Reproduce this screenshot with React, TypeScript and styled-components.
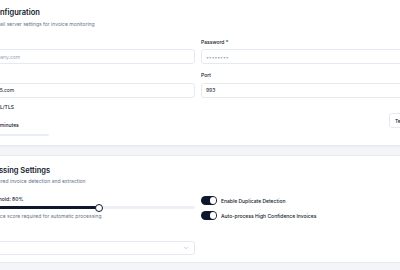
import styled, { createGlobalStyle } from "styled-components";
import { ChevronDown, Mail, Brain } from "lucide-react";

const GlobalStyle = createGlobalStyle`
  body {
    margin: 0;
    background: #f3f5f9;
    font-family: Inter, "Noto Sans", sans-serif;
    color: #0f172a;
    overflow: hidden;
  }
`;

// the page is wider than the window: its left edge and right edge run outside
const Page = styled.div`
  margin: -3px 0 0 -57px;
  width: 510px;
  display: flex;
  flex-direction: column;
  gap: 9px;
`;

const Card = styled.section<{ $padBottom: number }>`
  background: #ffffff;
  border: 1px solid #e7ebf1;
  border-radius: 6px;
  box-shadow: 0 1px 2px rgba(15, 23, 42, 0.04);
  padding: 10px 12px ${(p) => p.$padBottom}px;
`;

const Title = styled.h2`
  margin: 0;
  display: flex;
  align-items: center;
  gap: 4.5px;
  font-size: 7.5px;
  line-height: 10px;
  font-weight: 600;
`;

const Subtitle = styled.p`
  margin: 2.5px 0 0;
  font-size: 5px;
  line-height: 7px;
  color: #64748b;
`;

const Grid = styled.div<{ $top: number }>`
  display: grid;
  grid-template-columns: 1fr 1fr;
  column-gap: 6px;
  row-gap: 8px;
  margin-top: ${(p) => p.$top}px;
`;

const Field = styled.div<{ $top?: number }>`
  display: flex;
  flex-direction: column;
  gap: 3.5px;
  margin-top: ${(p) => p.$top ?? 0}px;
`;

const Label = styled.label`
  display: block;
  font-size: 5px;
  line-height: 7px;
  font-weight: 500;
  color: #111827;
`;

const Input = styled.input`
  box-sizing: border-box;
  height: 15px;
  width: 100%;
  border: 1px solid #e6eaf0;
  border-radius: 3px;
  padding: 0 4px;
  font-family: inherit;
  font-size: 5px;
  color: #0f172a;
  background: #fff;
  outline: none;

  &::placeholder {
    color: #94a3b8;
  }
`;

const Stack = styled.div<{ $gap: number }>`
  display: flex;
  flex-direction: column;
  gap: ${(p) => p.$gap}px;
`;

const ToggleRow = styled.label`
  display: flex;
  align-items: center;
  gap: 4px;
  height: 9px;
  font-size: 5px;
  font-weight: 500;
  color: #111827;
`;

const Switch = styled.span`
  box-sizing: border-box;
  flex: none;
  width: 16px;
  height: 8.5px;
  border-radius: 5px;
  background: #0f172a;
  padding: 1px;
  display: flex;
  justify-content: flex-end;

  &::after {
    content: "";
    width: 6.5px;
    height: 6.5px;
    border-radius: 50%;
    background: #fff;
  }
`;

const Track = styled.div<{ $height: number; $color: string }>`
  height: ${(p) => p.$height}px;
  width: 100%;
  border-radius: 2px;
  background: ${(p) => p.$color};
`;

const ButtonCell = styled.div`
  display: flex;
  justify-content: flex-end;
  align-items: center;
`;

const Button = styled.button`
  height: 15px;
  margin-top: 3px;
  padding: 0 5px;
  border: 1px solid #e6eaf0;
  border-radius: 3px;
  background: #fff;
  font-family: inherit;
  font-size: 5px;
  font-weight: 500;
  color: #0f172a;
`;

const Slider = styled.div`
  position: relative;
  height: 9px;
  display: flex;
  align-items: center;
`;

const SliderFill = styled.div`
  position: absolute;
  left: 0;
  height: 3px;
  border-radius: 2px;
  background: #0f172a;
`;

const Thumb = styled.div`
  position: absolute;
  top: 0.5px;
  width: 8px;
  height: 8px;
  margin-left: -4px;
  box-sizing: border-box;
  border-radius: 50%;
  border: 1.2px solid #0f172a;
  background: #fff;
`;

const Hint = styled.p`
  margin: 1px 0 0;
  font-size: 5px;
  line-height: 7px;
  color: #64748b;
`;

const Select = styled.div`
  box-sizing: border-box;
  height: 14px;
  border: 1px solid #e6eaf0;
  border-radius: 3px;
  padding: 0 5px;
  display: flex;
  align-items: center;
  justify-content: space-between;
  font-size: 5px;
  color: #0f172a;
  background: #fff;
`;

const threshold = 80;
const pct = ((threshold - 50) / 50) * 100;

export default function App() {
  return (
    <>
      <GlobalStyle />
      <Page>
        <Card $padBottom={9}>
          <Title>
            <Mail size={8} strokeWidth={2.2} />
            Email Configuration
          </Title>
          <Subtitle>Configure your email server settings for invoice monitoring</Subtitle>
          <Grid $top={11}>
            <Field>
              <Label>Email Address *</Label>
              <Input placeholder="invoicing@company.com" />
            </Field>
            <Field>
              <Label>Password *</Label>
              <Input type="password" placeholder="••••••••" />
            </Field>
            <Field>
              <Label>IMAP Server</Label>
              <Input defaultValue="outlook.office365.com" />
            </Field>
            <Field>
              <Label>Port</Label>
              <Input defaultValue="993" />
            </Field>
          </Grid>
          <Grid $top={5}>
            <Stack $gap={10.5}>
              <ToggleRow>
                <Switch />
                Enable SSL/TLS
              </ToggleRow>
              <Stack $gap={4.5}>
                <Label>Check interval: 15 minutes</Label>
                <Track $height={2} $color="#e9eef5" style={{ width: "39%" }} />
              </Stack>
            </Stack>
            <ButtonCell>
              <Button>Test Connection</Button>
            </ButtonCell>
          </Grid>
        </Card>

        <Card $padBottom={7}>
          <Title>
            <Brain size={8} strokeWidth={2.2} />
            AI Processing Settings
          </Title>
          <Subtitle>Configure AI-powered invoice detection and extraction</Subtitle>
          <Grid $top={11}>
            <div>
              <Label>Confidence Threshold: {threshold}%</Label>
              <Slider>
                <Track $height={3} $color="#edf0f4" />
                <SliderFill style={{ width: `calc(${pct}% + ${4 - (pct / 100) * 8}px)` }} />
                <Thumb style={{ left: `calc(${pct}% + ${4 - (pct / 100) * 8}px)` }} />
              </Slider>
              <Hint>Minimum confidence score required for automatic processing</Hint>
              <Field $top={10}>
                <Label>Language</Label>
                <Select>
                  <span>Auto-detect</span>
                  <ChevronDown size={6} color="#94a3b8" />
                </Select>
              </Field>
            </div>
            <Stack $gap={6}>
              <ToggleRow>
                <Switch />
                Enable Duplicate Detection
              </ToggleRow>
              <ToggleRow>
                <Switch />
                Auto-process High Confidence Invoices
              </ToggleRow>
            </Stack>
          </Grid>
        </Card>
      </Page>
    </>
  );
}
